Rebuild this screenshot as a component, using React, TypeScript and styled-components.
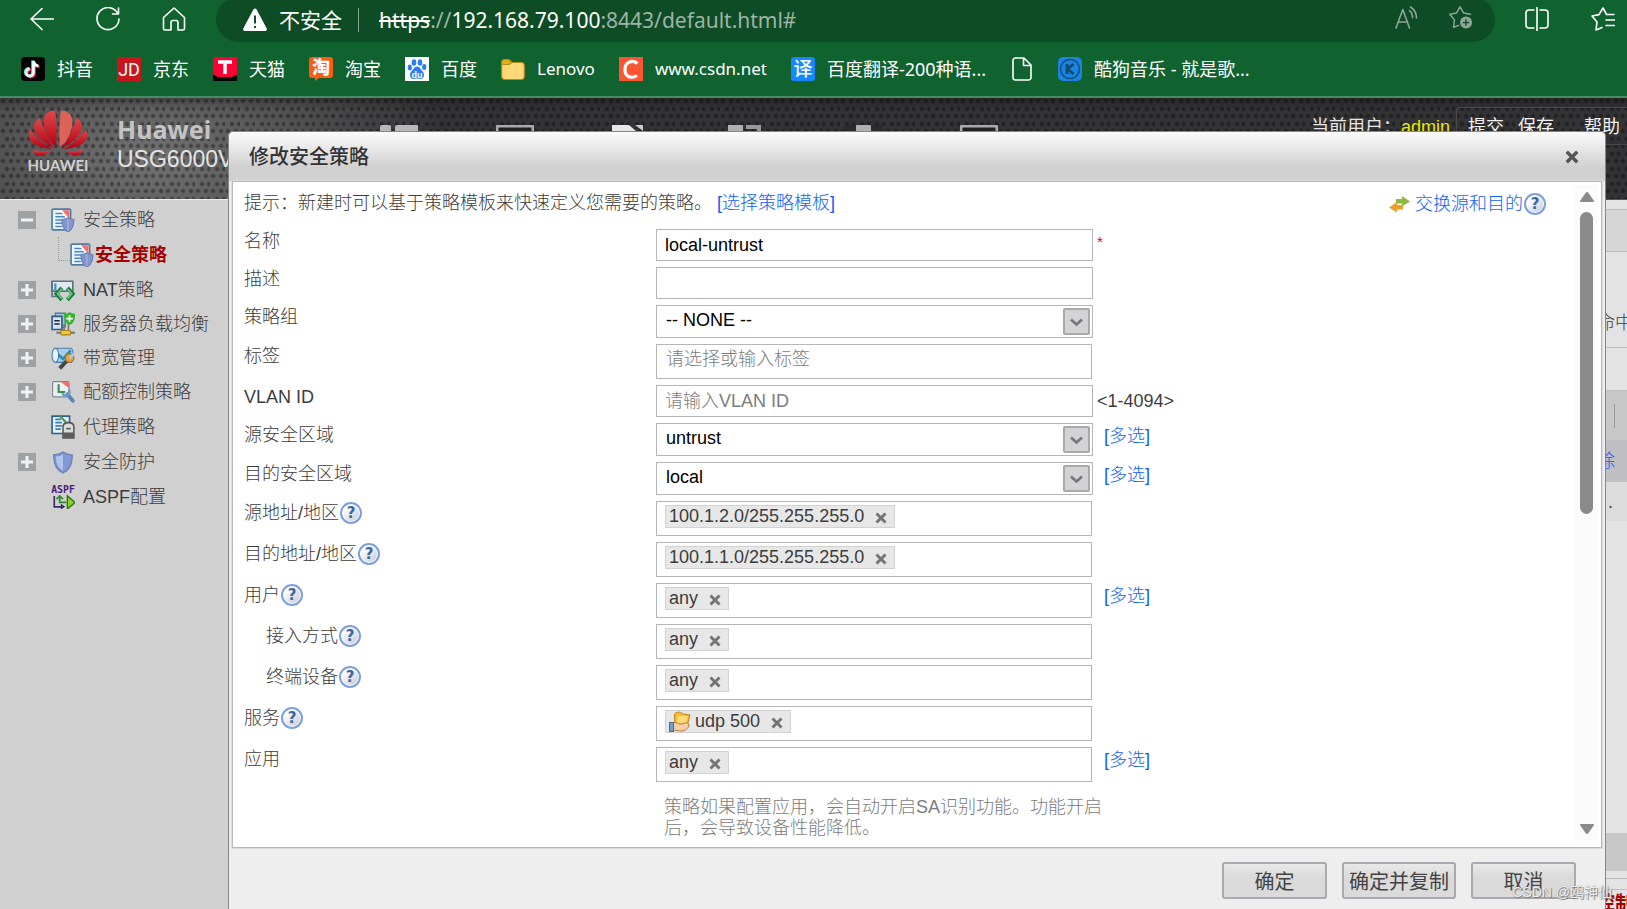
import React from 'react';
import styled, { createGlobalStyle } from 'styled-components';

const SONG = '"Liberation Sans", "Noto Sans CJK SC", sans-serif';
const UI = '"Noto Sans", "Noto Sans CJK SC", sans-serif';

const Global = createGlobalStyle`
  *, *::before, *::after { box-sizing: border-box; }
  body { margin: 0; }
  button, input, select { font: inherit; color: inherit; }
`;

const Page = styled.div`
  position: relative;
  display: flex;
  flex-direction: column;
  height: 100vh;
  overflow: hidden;
  background: #e3e3e3;
  color: #3c3c3c;
  font: 300 18px/24px ${SONG};
`;

/* ---------- browser chrome ---------- */

const Chrome = styled.div`
  flex: none;
  background: #10622f;
  border-bottom: 2px solid #4a8a62;
  color: #fff;
  font-family: ${UI};
  font-weight: 400;
`;

const Toolbar = styled.div`
  display: flex;
  align-items: center;
  gap: 42px;
  height: 42px;
  padding: 0 12px 0 30px;
`;

const IconButton = styled.button`
  display: flex;
  flex: none;
  align-items: center;
  justify-content: center;
  width: 24px;
  height: 24px;
  margin: 0 0 4px;
  padding: 0;
  border: 0;
  background: none;
  color: inherit;
`;

const AddressBar = styled.div`
  display: flex;
  flex: 1;
  align-items: center;
  gap: 12px;
  min-width: 0;
  height: 45px;
  margin: -3px -12px 0;
  padding: 0 22px 0 27px;
  border-radius: 23px;
  background: #0d4c25;
  overflow: hidden;
  white-space: nowrap;
`;

const Unsafe = styled.span`
  font-size: 21px;
`;

const Rule = styled.span`
  flex: none;
  width: 1px;
  height: 24px;
  margin: 0 8px 0 4px;
  background: #7fa58e;
`;

const Url = styled.span`
  flex: 1;
  overflow: hidden;
  font-size: 21px;
  line-height: 28px;
  color: #9fb3a6;

  s, b { color: #fff; font-weight: 400; }
`;

const PillIcons = styled.div`
  display: flex;
  gap: 30px;
  color: #8fa596;
`;

const Bookmarks = styled.nav`
  display: flex;
  align-items: center;
  gap: 24px;
  height: 54px;
  padding: 0 21px;
  overflow: hidden;
`;

const Bookmark = styled.a<{ $latin?: boolean }>`
  display: flex;
  flex: none;
  align-items: center;
  gap: 12px;
  color: #fff;
  font-size: ${(p) => (p.$latin ? 17 : 18)}px;
  text-decoration: none;
  white-space: nowrap;
`;

/* ---------- device header ---------- */

const dot = (x: number, y: number) =>
  `radial-gradient(circle at ${x}px ${y}px, rgba(0,0,0,0.38) 0 1px, transparent 3px) 0 0 / 15px 15px`;

const Banner = styled.header`
  display: flex;
  flex: none;
  height: 101px;
  padding-left: 26px;
  background: ${dot(3, 3)}, ${dot(11, 3)}, ${dot(7, 11)}, ${dot(14, 11)},
    linear-gradient(rgba(0, 0, 0, 0.25), transparent 12px),
    radial-gradient(ellipse 300px 170px at 150px 60px, #737373, #333335);
  color: #e6e6e6;
`;

const Brand = styled.div`
  display: flex;
  flex: none;
  gap: 27px;
  width: 354px;
  padding-top: 10px;
`;

const Product = styled.div`
  padding-top: 6px;
  font-size: 23px;
  line-height: 30px;
  color: #e4e4e4;

  strong {
    display: block;
    font: 700 25px/30px ${UI};
    color: #c4c4c4;
  }
`;

const Modules = styled.div`
  display: flex;
  flex: 1;
  gap: 78px;
  padding-top: 27px;

  svg { flex: none; }
`;

const Session = styled.div`
  display: flex;
  flex: none;
  padding-top: 9px;
  white-space: nowrap;
  font-weight: 400;

  > span { padding: 8px 6px 0 0; }
  em { color: #e8e800; font-style: normal; }
`;

const Actions = styled.div`
  display: flex;
  height: 38px;
  padding: 7px 7px 0 6px;
  border: 1px solid #4a4a4c;
  border-right: 0;
  border-radius: 4px 0 0 4px;

  a {
    padding: 0 5px;
    color: #f2f2f2;
    text-decoration: none;
  }
  a + a { margin-left: 4px; }
  a:last-child { margin-left: 20px; padding-right: 0; }
`;

/* ---------- page body ---------- */

const Columns = styled.div`
  display: flex;
  flex: 1;
  min-height: 0;
`;

const Sidebar = styled.nav`
  flex: none;
  width: 228px;
  padding-top: 3px;
  border-top: 1px solid #eee;
  background: #d0d0d0;
`;

const TreeRow = styled.div<{ $leaf?: boolean }>`
  display: flex;
  align-items: center;
  height: ${(p) => (p.$leaf ? 36 : 34)}px;
  padding-left: 18px;
`;

const Toggle = styled.button`
  flex: none;
  display: flex;
  align-items: center;
  justify-content: center;
  width: 18px;
  height: 18px;
  padding: 0;
  border: 0;
  background: #9fa2a5;
`;

const Spacer = styled.span`
  width: 18px;
`;

const Branch = styled.span`
  align-self: flex-start;
  width: 12px;
  height: 24px;
  margin-left: 22px;
  border: dotted #999;
  border-width: 0 0 1px 1px;
`;

const TreeLink = styled.a<{ $current?: boolean }>`
  display: flex;
  align-items: center;
  gap: ${(p) => (p.$current ? 1 : 8)}px;
  margin-left: ${(p) => (p.$current ? 0 : 15)}px;
  color: ${(p) => (p.$current ? '#a60000' : '#3c3c3c')};
  font-weight: ${(p) => (p.$current ? 700 : 300)};
  text-decoration: none;
  white-space: nowrap;
`;

const Backdrop = styled.main`
  flex: 1;
  min-width: 0;
  border-top: 1px solid #8a3a3a;
`;

const Strip = styled.div<{ $h: number; $bg?: string; $line?: boolean; $color?: string; $bold?: boolean }>`
  display: flex;
  align-items: center;
  justify-content: flex-end;
  height: ${(p) => p.$h}px;
  background: ${(p) => p.$bg || 'transparent'};
  border-bottom: ${(p) => (p.$line ? '1px solid #bdbdbd' : '0')};
  color: ${(p) => p.$color || '#3c3c3c'};
  font-weight: ${(p) => (p.$bold ? 700 : 300)};

  span {
    width: 30px;
    overflow: hidden;
    white-space: nowrap;
  }
  span.divider {
    width: 13px;
    height: 24px;
    border-left: 1px solid #999;
  }
  span.dots { width: 19px; }
`;

/* ---------- dialog ---------- */

const Dialog = styled.section`
  position: absolute;
  top: 131px;
  right: 21px;
  bottom: 0;
  left: 228px;
  display: flex;
  flex-direction: column;
  border: 1px solid #868686;
  border-bottom: 0;
  border-radius: 5px 5px 0 0;
  background: #eee;
`;

const TitleBar = styled.div`
  display: flex;
  flex: none;
  align-items: center;
  justify-content: space-between;
  height: 49px;
  padding: 0 26px 0 20px;
  border-radius: 5px 5px 0 0;
  background: linear-gradient(#fbfbfb, #cfcfcf 75%, #d2d2d2);

  h1 {
    margin: 0;
    font-size: 20px;
    font-weight: 500;
    color: #333;
  }
`;

const PlainButton = styled.button`
  display: flex;
  padding: 0;
  border: 0;
  background: none;
`;

const Body = styled.div`
  display: flex;
  flex: 1;
  min-height: 0;
  margin: 0 3px;
  border: 1px solid #b8b8b8;
  background: #fff;
  box-shadow: 0 0 0 1px #dcdcdc;
`;

const Form = styled.form`
  display: flex;
  flex: 1;
  flex-direction: column;
  gap: 6px;
  min-width: 0;
  padding: 9px 0 0 11px;
  overflow: hidden;
`;

const Hint = styled.div`
  display: flex;
  align-items: center;
  justify-content: space-between;
  height: 24px;
  margin-bottom: 8px;
  padding-right: 29px;
  white-space: nowrap;
`;

const Link = styled.a`
  color: #1060ff;
  text-decoration: none;
`;

const Swap = styled.span`
  display: flex;
  align-items: center;
  gap: 5px;
  padding-top: 2px;

  > span { display: flex; align-items: center; gap: 1px; }
`;

const Row = styled.div`
  display: grid;
  grid-template-columns: 412px 437px 1fr;
`;

const Caption = styled.div<{ $indent?: boolean }>`
  display: flex;
  align-items: center;
  gap: 1px;
  height: 24px;
  padding-left: ${(p) => (p.$indent ? 22 : 0)}px;
`;

const HelpButton = styled.button`
  flex: none;
  width: 22px;
  height: 22px;
  padding: 0;
  border: 2px solid #7c9fe0;
  border-radius: 50%;
  background: linear-gradient(135deg, #fff 20%, #c2c6d0);
  box-shadow: inset 0 0 0 1px #fff;
  color: #3a66a8;
  font: 700 15px/18px "DejaVu Sans", sans-serif;
`;

const Aside = styled.div<{ $middle?: boolean }>`
  align-self: ${(p) => (p.$middle ? 'center' : 'start')};
  padding-left: 4px;

  a { display: block; padding: 1px 0 0 7px; }
`;

const Star = styled.span`
  color: #f00;
  font-size: 15px;
  font-weight: 400;
`;

const TextInput = styled.input`
  width: 100%;
  height: 32px;
  padding: 0 8px;
  border: 1px solid #b5b5ba;
  background: #fff;
  color: #000;
  outline: 0;

  &::placeholder { color: #7c7c7c; opacity: 1; }
`;

const SelectBox = styled.div`
  position: relative;
  height: 33px;

  svg {
    position: absolute;
    top: 3px;
    right: 3px;
    pointer-events: none;
  }
`;

const Select = styled.select`
  width: 100%;
  height: 100%;
  padding: 0 30px 3px 9px;
  border: 1px solid #b5b5ba;
  border-radius: 0;
  background: #fff;
  color: #000;
  appearance: none;
  outline: 0;
`;

const TagBox = styled.div`
  display: flex;
  align-items: flex-start;
  height: 35px;
  margin-right: 1px;
  padding: 3px 8px;
  border: 1px solid #b5b5ba;

  input {
    flex: 1;
    min-width: 0;
    height: 22px;
    padding: 0 1px;
    border: 0;
    background: none;
    outline: 0;
  }
  input::placeholder { color: #7c7c7c; opacity: 1; }
`;

const Tag = styled.span`
  display: flex;
  align-items: center;
  gap: 4px;
  height: 23px;
  padding: 0 7px 0 3px;
  border: 1px solid #d2d2d2;
  background: #e7e7e7;
  line-height: 21px;
  white-space: nowrap;

  button { margin: 2px 0 0 7px; }
`;

const Note = styled.p`
  width: 440px;
  margin: 9px 0 0 420px;
  line-height: 21px;
  color: #7c7c7c;
`;

const Scrollbar = styled.div`
  display: flex;
  flex: none;
  flex-direction: column;
  align-items: center;
  width: 23px;
  margin: 3px 3px 6px 0;
  padding: 7px 0;
  background: #fbfbfb;
`;

const Thumb = styled.div`
  width: 13px;
  height: 47%;
  margin: 10px 0 auto;
  border-radius: 7px;
  background: #8a8a8a;
`;

const Footer = styled.div`
  display: flex;
  flex: none;
  justify-content: flex-end;
  gap: 15px;
  padding: 14px 29px 10px;
`;

const PushButton = styled.button`
  min-width: 105px;
  height: 37px;
  padding: 0 5px;
  border: 2px solid #a9a9ae;
  border-radius: 3px;
  background: linear-gradient(#e9e9e9, #dadada 40%);
  color: #444;
  font: 400 20px/30px "Noto Sans CJK SC", sans-serif;
`;

const Watermark = styled.div`
  position: absolute;
  right: 15px;
  bottom: 6px;
  color: rgba(255, 255, 255, 0.85);
  font: 400 14px/22px "Liberation Sans", "Noto Sans CJK SC", sans-serif;
  text-shadow: 1px 1px 1px #777, 0 0 1px #999;
`;

/* ---------- drawings ---------- */

const Svg = ({ w = 24, h = w, box, children }: { w?: number; h?: number; box?: string; children: React.ReactNode }) => (
  <svg width={w} height={h} viewBox={box || `0 0 ${w} ${h}`} fill="none" aria-hidden="true">{children}</svg>
);

const TreeIcon = ({ children }: { children: React.ReactNode }) => <Svg box="0 0 22 22">{children}</Svg>;

const line = { stroke: 'currentColor', strokeWidth: 1.6, strokeLinecap: 'round', strokeLinejoin: 'round' } as const;

const BackIcon = () => <Svg><path {...line} d="M24 12H1M12 1.5 1 12l11 10.500" /></Svg>;
const ReloadIcon = () => <Svg><path {...line} d="M22 7A11 11 0 1 0 23 12M22.500 1v6h-6" /></Svg>;
const HomeIcon = () => <Svg><path {...line} d="M1.500 10.500 12 1l10.500 9.500V21.500a1.500 1.500 0 0 1-1.500 1.500h-5v-7.500a2 2 0 0 0-2-2h-3a2 2 0 0 0-2 2V23H3a1.500 1.500 0 0 1-1.500-1.500z" /></Svg>;
const WarnIcon = () => (
  <Svg><path fill="#fff" d="M10.400 1.500c.7-1.300 2.500-1.300 3.200 0l10 18.800c.6 1.200-.2 2.700-1.600 2.700H2c-1.400 0-2.200-1.500-1.600-2.700z" /><path d="M12 7.500v8M12 18v2" stroke="#0d4c25" strokeWidth="2" /></Svg>
);
const ReadIcon = () => <Svg><path {...line} d="M1 22 7.800 3.500 14.500 22M3.500 16h9M14.500 4.500a9 9 0 0 1 3 7M15.500 1a13 13 0 0 1 6 11" /></Svg>;
const STAR = 'M10.500 21 5 23l.9-7.900L.8 9l7.400-1.400L12 1l3.800 6.600L23.200 9';
const StarAddIcon = () => (
  <Svg w={26} h={25}><path {...line} d={STAR} /><circle cx="18.500" cy="18" r="6.500" fill="currentColor" /><path d="M18.500 14.500v7M15 18h7" stroke="#0d4c25" strokeWidth="1.500" /></Svg>
);
const SplitIcon = () => <Svg><path {...line} d="M9 3H4a3 3 0 0 0-3 3v12a3 3 0 0 0 3 3h5M15 3h5a3 3 0 0 1 3 3v12a3 3 0 0 1-3 3h-5M12 .500v23" /></Svg>;
const FavIcon = () => <Svg><path {...line} d="M11 20.500 5 23l1-7.900L1 9l7-1.400L12 1l3.600 6.500H23M15 13h9M15 18.500h9" /></Svg>;

const mark = (bg: string, radius: number, children: React.ReactNode) => (
  <Svg><rect width="24" height="24" rx={radius} fill={bg} />{children}</Svg>
);
const markText = { textAnchor: 'middle', fill: '#fff', x: 12 } as const;

const NOTE_PATH = 'M12.500 4v11.500a3.700 3.700 0 1 1-3.700-3.700M12.500 4c.4 3 2.500 4.700 5 4.800';

const bookmarks: { label: string; latin?: boolean; icon: React.ReactNode }[] = [
  {
    label: '抖音',
    icon: mark('#000', 4, (
      <g strokeWidth="2.600">
        <path d={NOTE_PATH} stroke="#25f4ee" transform="translate(-1 -.5)" />
        <path d={NOTE_PATH} stroke="#fe2c55" transform="translate(1 1)" />
        <path d={NOTE_PATH} stroke="#fff" />
      </g>
    )),
  },
  { label: '京东', icon: mark('#c9151e', 0, <text {...markText} y="19" fontFamily="Roboto" fontSize="18" fontWeight="400">JD</text>) },
  {
    label: '天猫',
    icon: mark('#ff0036', 0, (
      <>
        <path d="M0 24v-6c3 0 3 2 6 2h12c3 0 3-2 6-2v6z" fill="#000" />
        <path d="M5 5h14M12 5v12" stroke="#fff" strokeWidth="3.500" />
      </>
    )),
  },
  {
    label: '淘宝',
    icon: (
      <Svg>
        <path d="M3 0h18a3 3 0 0 1 3 3v15a3 3 0 0 1-3 3h-11l-4 3v-3H3a3 3 0 0 1-3-3V3a3 3 0 0 1 3-3z" fill="#ff5a12" />
        <text {...markText} y="17" fontFamily="Noto Sans CJK SC" fontSize="18" fontWeight="900">淘</text>
      </Svg>
    ),
  },
  {
    label: '百度',
    icon: mark('#fff', 0, (
      <>
        <g fill="#2d7df6">
          <ellipse cx="9" cy="5.500" rx="2.300" ry="3.200" /><ellipse cx="15" cy="5.500" rx="2.300" ry="3.200" />
          <ellipse cx="4.800" cy="10.500" rx="2.100" ry="2.900" /><ellipse cx="19.200" cy="10" rx="2.100" ry="2.900" />
          <path d="M12 9.500c3 0 3.500 3 5.500 4.800 2.500 2.400 1.800 7.700-2 7.700-1.500 0-2-.4-3.500-.4s-2 .4-3.500.4c-3.800 0-4.500-5.300-2-7.700 2-1.800 2.500-4.800 5.500-4.800z" />
        </g>
        <text {...markText} y="20.500" fontFamily="Liberation Sans" fontSize="9" fontWeight="700">du</text>
      </>
    )),
  },
  {
    label: 'Lenovo',
    latin: true,
    icon: (
      <Svg>
        <path d="M.700 5.500a3 3 0 0 1 3-3h4l3 3h9.600a3 3 0 0 1 3 3v11a3 3 0 0 1-3 3H3.700a3 3 0 0 1-3-3z" fill="#ffd978" stroke="#b88a1a" strokeWidth="1.200" />
        <path d="M.700 7.500v-2a3 3 0 0 1 3-3h4l3 3-2.500 2z" fill="#e3b112" stroke="#b88a1a" strokeWidth="1.200" />
      </Svg>
    ),
  },
  { label: 'www.csdn.net', latin: true, icon: mark('#fc5531', 0, <path d="M18.500 6.500C14 2.500 6 4.500 6 12.500s7 9.500 12 6" stroke="#fff" strokeWidth="3.200" />) },
  { label: '百度翻译-200种语...', icon: mark('#1688ff', 3, <text {...markText} y="19" fontFamily="Noto Sans CJK SC" fontSize="19" fontWeight="500">译</text>) },
  { label: '', icon: <Svg><path {...line} d="M5.500 1H14l7 7v12.500a2.500 2.500 0 0 1-2.500 2.500h-13A2.500 2.500 0 0 1 3 20.500v-17A2.500 2.500 0 0 1 5.500 1zM13.500 1v7.500H21" /></Svg> },
  {
    label: '酷狗音乐 - 就是歌...',
    icon: mark('#1d83e2', 5, (
      <>
        <circle cx="12" cy="12" r="9.500" stroke="#0e4f7c" strokeWidth="1.500" />
        <path d="M9 7v10M15.500 7 9.500 12l6 5" stroke="#0d4a70" strokeWidth="2.800" />
      </>
    )),
  },
];

const HuaweiLogo = () => (
  <Svg w={64} h={64}>
    <defs>
      <linearGradient id="petal" x1="0" y1="0" x2="0" y2="1">
        <stop offset="0" stopColor="#e2474a" />
        <stop offset="1" stopColor="#b30012" />
      </linearGradient>
    </defs>
    <g fill="url(#petal)">
      <path d="M30 39C18 30 15 12 20 6c3-3 8-4 9-3 2 10 2 25 1 36z" />
      <path d="M34 39C46 30 49 12 44 6c-3-3-8-4-9-3-2 10-2 25-1 36z" fill="#dd6258" />
      <path d="M28 40C13 33 7 23 8 17c1-4 4-6 6-7 2 9 8 22 14 30z" />
      <path d="M36 40C51 33 57 23 56 17c-1-4-4-6-6-7-2 9-8 22-14 30z" />
      <path d="M26 41C12 40 4 35 3 29c0-3 0-6 1-8 6 8 13 15 22 20z" />
      <path d="M38 41c14-1 22-6 23-12 0-3 0-6-1-8-6 8-13 15-22 20z" />
      <path d="M25 43c-7 5-11 5-14 4-3-2-4-4-4-5 6 1 12 1 18 1z" />
      <path d="M39 43c7 5 11 5 14 4 3-2 4-4 4-5-6 1-12 1-18 1z" />
    </g>
    <text x="32" y="63" textAnchor="middle" fill="#d0d0d0" fontFamily="Lato" fontSize="15" fontWeight="700">HUAWEI</text>
  </Svg>
);

const moduleIcons = [
  <><rect width="11" height="18" rx="2" fill="#b8b8b8" /><rect x="15" width="24" height="18" rx="2" fill="#b8b8b8" /></>,
  <rect x="1" y="1" width="36" height="26" rx="1" stroke="#aaa" strokeWidth="3" fill="#222" />,
  <><path d="M0 0h17l14 12v24H0z" fill="#e6e6e6" /><path d="M23 0h8v6z" fill="#ccc" /></>,
  <><rect width="15" height="18" fill="#b0b0b0" /><path d="M18 2h13v14" stroke="#999" strokeWidth="4" /></>,
  <><rect x="0" width="38" height="22" fill="#2a2a2a" /><rect x="12" width="15" height="20" rx="1" fill="#b0b0b0" /></>,
  <rect x="1" y="1" width="36" height="26" rx="2" stroke="#aaa" strokeWidth="3" fill="#222" />,
];

const shieldPath = 'M0 1.500C2 1.500 4 1 5.500 0 7 1 9 1.500 11 1.500 11 7 10 10.500 5.500 13 1 10.500 0 7 0 1.500z';

const PolicyIcon = () => (
  <TreeIcon>
    <rect x="1" y="1" width="17" height="19" rx="1" fill="#eaf4fb" stroke="#4d7ea3" strokeWidth="1.500" />
    <path d="M4 5h7M4 8h9M4 11h7M4 14h6M4 17h6" stroke="#4b8cc0" strokeWidth="1.400" />
    <path d="M10 2h7v8z" fill="#f07070" />
    <path d="m9 2 8 10" stroke="#fff" strokeWidth="1.500" />
    <g transform="translate(10 9)"><path d={shieldPath} fill="#8397cc" stroke="#6c7fbc" /><path d="M5.500 1v11" stroke="#a9b8e4" /></g>
  </TreeIcon>
);

const treeIcons: Record<string, React.ReactNode> = {
  nat: (
    <TreeIcon>
      <path d="M1 3h19v9H1z" fill="#dfe8ee" stroke="#5a7384" strokeWidth="1.500" />
      <path d="M1 3v14h5" stroke="#5a7384" strokeWidth="1.500" /><path d="M4 5v6" stroke="#3a8bd0" strokeWidth="2" />
      <path d="m10 9-5 5.500 5 5.500M15 9l5 5.500-5 5.500" stroke="#1e7d3e" strokeWidth="3.600" />
      <path d="m10 10-4 4.500 4 4.500M15 10l4 4.500-4 4.500" stroke="#6fd08a" strokeWidth="1.400" />
    </TreeIcon>
  ),
  server: (
    <TreeIcon>
      <path d="M4 1h9v13H4z" fill="#9fc2e4" stroke="#4b6c8c" /><path d="M1 4h9v12H1z" fill="#d5e4f2" stroke="#335b80" strokeWidth="1.500" />
      <path d="M3 8h5M3 11h5" stroke="#224" strokeWidth="1.500" />
      <path d="M12 11v8M16 8v10" stroke="#777" strokeWidth="1.500" />
      <path d="M17 0c2 1.500 3 1.500 5 1.500 0 6-1 8.500-5 10.500-4-2-5-4.500-5-10.500 2 0 3 0 5-1.500z" fill="#35b52b" />
      <path d="M17 3v6M14 6h6" stroke="#fff" strokeWidth="1.600" />
      <path d="M5 19h17" stroke="#777" strokeWidth="2" /><rect x="9" y="17" width="9" height="4" rx="1" fill="#f0c63c" stroke="#a8851a" />
    </TreeIcon>
  ),
  band: (
    <TreeIcon>
      <path d="M4 2h14c3 0 3 13 0 13H4z" fill="#a9cdee" stroke="#4c7aa8" /><ellipse cx="4" cy="8.500" rx="3" ry="6.500" fill="#e6f2fc" stroke="#4c7aa8" />
      <path d="m7 8 4 4 7-8" stroke="#1f8fb5" strokeWidth="2.500" />
      <path d="M8 20.500 15 13" stroke="#444" strokeWidth="3.500" /><circle cx="17" cy="11" r="4" fill="#e6a23c" stroke="#a8701c" /><path d="m17 11 4-4" stroke="#a9cdee" strokeWidth="2.500" />
    </TreeIcon>
  ),
  quota: (
    <TreeIcon>
      <rect x="1.500" y="1.500" width="15" height="14" rx="1" fill="#eceff2" stroke="#7b8794" />
      <path d="M9 1.500h7.500v6z" fill="#ee7070" /><path d="M7 4v7h6" stroke="#3a8f58" strokeWidth="2" />
      <path d="m15 13 5 6" stroke="#5b87b8" strokeWidth="3.500" strokeLinecap="round" />
      <path d="M10.500 12a3.200 3.200 0 0 0 5.500 1.500 3.200 3.200 0 0 0 0-4.500" stroke="#6d9aca" strokeWidth="2.200" />
    </TreeIcon>
  ),
  proxy: (
    <TreeIcon>
      <path d="M1 1h16v16H1z" fill="#e3f0fa" stroke="#2f6288" strokeWidth="1.500" />
      <path d="M4 4h5M4 7h6M4 10h6M4 13h5" stroke="#3c7fb5" strokeWidth="1.500" /><path d="m8 1 8 8" stroke="#4a9a4a" strokeWidth="2" />
      <path d="M11 11c0-3 2-4 5-4s5 1 5 4v10H11z" fill="#dcdcdc" stroke="#555" strokeWidth="1.400" /><path d="M11 16h10v5H11z" fill="#5c5c5c" /><path d="M14 12.500h4" stroke="#4a6a50" strokeWidth="1.600" />
    </TreeIcon>
  ),
  shield: (
    <TreeIcon>
      <path d="M11 2c3 2 6 2.500 8.500 2.500C19.500 12 18 18 11 21 4 18 2.500 12 2.500 4.500 5 4.500 8 4 11 2z" fill="#7f9ad6" stroke="#6c82ba" strokeWidth="1.300" />
      <path d="M11 4v15C6 16 4.500 11 4.500 6c3 0 4.500-.6 6.500-2z" fill="#b3c5ee" />
    </TreeIcon>
  ),
  aspf: (
    <TreeIcon>
      <text x="11" y="7" textAnchor="middle" fill="#4a1a7a" fontFamily="DejaVu Sans Mono" fontSize="9" fontWeight="700">ASPF</text>
      <path d="M3 10v10h7" stroke="#3c2a66" strokeWidth="1.500" /><path d="m9 17 4 3-4 2.500z" fill="#3c2a66" />
      <path d="M14 16H8v-5M5 13l3-3 3 3" stroke="#2f8a2f" strokeWidth="1.600" />
      <path d="m15 10 7 6-7 6z" fill="#8fd02c" stroke="#2a7a1a" strokeWidth="1.300" />
    </TreeIcon>
  ),
};

const Cross = ({ size, color }: { size: number; color: string }) => (
  <Svg w={size} box="0 0 12 12"><path d="m1.500 1.500 9 9M10.500 1.500l-9 9" stroke={color} strokeWidth="2.900" /></Svg>
);

const DropArrow = () => (
  <Svg w={27} h={27}>
    <rect x="1" y="1" width="25" height="25" rx="1" fill="#d3d3d5" stroke="#a9a9ad" strokeWidth="2" />
    <path d="m8 11.500 5.500 5 5.500-5" stroke="#77777b" strokeWidth="2.600" />
  </Svg>
);

const SwapIcon = () => (
  <Svg w={21} h={18}>
    <path d="M7 4h6V1l8 5.500-8 5V8.500H7z" fill="#8fb843" />
    <path d="M14 10h-6V7L0 12.500l8 5v-3h6z" fill="#eaa02c" />
  </Svg>
);

const ServiceIcon = () => (
  <Svg w={22}>
    <path d="M5.500 3c3-3 7-2 8.500 0l7 1-3 11-12 1z" fill="#f6bd38" stroke="#c4811c" />
    <path d="M9 5h10l-2 8H7z" fill="#ffdc70" />
    <path d="M4 12c4-2 6 2 9 1s7-2 7 1-4 6-8 6-6-1-8-1z" fill="#f6d0a4" stroke="#b57436" />
    <rect x=".500" y="11.500" width="4" height="9" fill="#6f9fd0" stroke="#3f6f9f" />
  </Svg>
);

/* ---------- assembled parts ---------- */

const Help = () => <HelpButton type="button" aria-label="帮助">?</HelpButton>;

const MultiSelect = () => <Aside><Link href="#">[多选]</Link></Aside>;

type FieldProps = { id: string; label: string; help?: boolean; indent?: boolean; aside?: React.ReactNode; children: React.ReactNode };
const Field = ({ id, label, help, indent, aside, children }: FieldProps) => (
  <Row>
    <Caption $indent={indent}>
      <label htmlFor={id}>{label}</label>
      {help && <Help />}
    </Caption>
    {children}
    {aside}
  </Row>
);

const Dropdown = ({ id, value }: { id: string; value: string }) => (
  <SelectBox>
    <Select id={id} defaultValue={value}><option>{value}</option></Select>
    <DropArrow />
  </SelectBox>
);

const TagInput = ({ id, value, icon, placeholder }: { id: string; value?: string; icon?: React.ReactNode; placeholder?: string }) => (
  <TagBox>
    {value && (
      <Tag>
        {icon}
        {value}
        <PlainButton type="button" aria-label={`删除 ${value}`}><Cross size={12} color="#747474" /></PlainButton>
      </Tag>
    )}
    <input id={id} placeholder={placeholder} />
  </TagBox>
);

const tree = [
  { label: 'NAT策略', icon: 'nat', open: true },
  { label: '服务器负载均衡', icon: 'server', open: true },
  { label: '带宽管理', icon: 'band', open: true },
  { label: '配额控制策略', icon: 'quota', open: true },
  { label: '代理策略', icon: 'proxy', open: false },
  { label: '安全防护', icon: 'shield', open: true },
  { label: 'ASPF配置', icon: 'aspf', open: false },
];

export default function App() {
  return (
    <Page>
      <Global />
      <Chrome>
        <Toolbar>
          <IconButton aria-label="后退"><BackIcon /></IconButton>
          <IconButton aria-label="刷新"><ReloadIcon /></IconButton>
          <IconButton aria-label="主页"><HomeIcon /></IconButton>
          <AddressBar>
            <WarnIcon />
            <Unsafe>不安全</Unsafe>
            <Rule />
            <Url><s>https</s>://<b>192.168.79.100</b>:8443/default.html#</Url>
            <PillIcons>
              <IconButton aria-label="朗读"><ReadIcon /></IconButton>
              <IconButton aria-label="收藏"><StarAddIcon /></IconButton>
            </PillIcons>
          </AddressBar>
          <IconButton aria-label="分屏"><SplitIcon /></IconButton>
          <IconButton aria-label="收藏夹"><FavIcon /></IconButton>
        </Toolbar>
        <Bookmarks>
          {bookmarks.map((b) => (
            <Bookmark key={b.label} href="#" $latin={b.latin}>
              {b.icon}
              {b.label && <span>{b.label}</span>}
            </Bookmark>
          ))}
        </Bookmarks>
      </Chrome>

      <Banner>
        <Brand>
          <HuaweiLogo />
          <Product><strong>Huawei</strong>USG6000V</Product>
        </Brand>
        <Modules>
          {moduleIcons.map((icon, i) => <Svg key={i} w={38} h={36}>{icon}</Svg>)}
        </Modules>
        <Session>
          <span>当前用户：<em>admin</em></span>
          <Actions>
            <a href="#">提交</a>
            <a href="#">保存</a>
            <a href="#">帮助</a>
          </Actions>
        </Session>
      </Banner>

      <Columns>
        <Sidebar>
          <TreeRow>
            <Toggle aria-label="收起"><Svg w={12}><path d="M0 6h12" stroke="#f2f2f2" strokeWidth="3" /></Svg></Toggle>
            <TreeLink href="#"><PolicyIcon />安全策略</TreeLink>
          </TreeRow>
          <TreeRow $leaf>
            <Spacer />
            <Branch />
            <TreeLink href="#" $current><PolicyIcon />安全策略</TreeLink>
          </TreeRow>
          {tree.map((t) => (
            <TreeRow key={t.label} $leaf={!t.open}>
              {t.open ? (
                <Toggle aria-label="展开"><Svg w={12}><path d="M0 6h12M6 0v12" stroke="#f2f2f2" strokeWidth="3" /></Svg></Toggle>
              ) : <Spacer />}
              <TreeLink href="#">{treeIcons[t.icon]}{t.label}</TreeLink>
            </TreeRow>
          ))}
        </Sidebar>
        <Backdrop>
          <Strip $h={10} $line />
          <Strip $h={42} $bg="#d6d6d6" $line />
          <Strip $h={47} />
          <Strip $h={49} $line><span>命中</span></Strip>
          <Strip $h={43} $line />
          <Strip $h={49} $bg="#c8c8c9"><span className="divider" /></Strip>
          <Strip $h={42} $bg="#bfbfc2" $color="#1060ff"><span>除</span></Strip>
          <Strip $h={39} $bg="#dcdcdc"><span className="dots">.</span></Strip>
          <Strip $h={312} />
          <Strip $h={38} $bg="#c8c8c8" />
          <Strip $h={8} $line />
          <Strip $h={11} $line />
          <Strip $h={26} $color="#a60000" $bold><span>控制台</span></Strip>
        </Backdrop>
      </Columns>

      <Dialog role="dialog" aria-labelledby="dialog-title">
        <TitleBar>
          <h1 id="dialog-title">修改安全策略</h1>
          <PlainButton type="button" aria-label="关闭"><Cross size={14} color="#555" /></PlainButton>
        </TitleBar>
        <Body>
          <Form>
            <Hint>
              <span>提示：新建时可以基于策略模板来快速定义您需要的策略。 <Link href="#">[选择策略模板]</Link></span>
              <Swap>
                <SwapIcon />
                <span><Link href="#">交换源和目的</Link><Help /></span>
              </Swap>
            </Hint>
            <Field id="name" label="名称" aside={<Aside><Star>*</Star></Aside>}>
              <TextInput id="name" defaultValue="local-untrust" />
            </Field>
            <Field id="desc" label="描述"><TextInput id="desc" /></Field>
            <Field id="group" label="策略组"><Dropdown id="group" value="-- NONE --" /></Field>
            <Field id="tag" label="标签"><TagInput id="tag" placeholder="请选择或输入标签" /></Field>
            <Field id="vlan" label="VLAN ID" aside={<Aside $middle>&lt;1-4094&gt;</Aside>}>
              <TextInput id="vlan" placeholder="请输入VLAN ID" />
            </Field>
            <Field id="src-zone" label="源安全区域" aside={<MultiSelect />}><Dropdown id="src-zone" value="untrust" /></Field>
            <Field id="dst-zone" label="目的安全区域" aside={<MultiSelect />}><Dropdown id="dst-zone" value="local" /></Field>
            <Field id="src-addr" label="源地址/地区" help><TagInput id="src-addr" value="100.1.2.0/255.255.255.0" /></Field>
            <Field id="dst-addr" label="目的地址/地区" help><TagInput id="dst-addr" value="100.1.1.0/255.255.255.0" /></Field>
            <Field id="user" label="用户" help aside={<MultiSelect />}><TagInput id="user" value="any" /></Field>
            <Field id="access" label="接入方式" help indent><TagInput id="access" value="any" /></Field>
            <Field id="device" label="终端设备" help indent><TagInput id="device" value="any" /></Field>
            <Field id="service" label="服务" help><TagInput id="service" value="udp 500" icon={<ServiceIcon />} /></Field>
            <Field id="app" label="应用" aside={<MultiSelect />}><TagInput id="app" value="any" /></Field>
            <Note>策略如果配置应用，会自动开启SA识别功能。功能开启后，会导致设备性能降低。</Note>
          </Form>
          <Scrollbar>
            <Svg w={14} h={10}><path d="M7 0c.6 0 1 .3 1.300.7L14 9c0 .6-.3 1-1 1H1c-.7 0-1-.4-1-1L5.700.7C6 .3 6.400 0 7 0z" fill="#8a8a8a" /></Svg>
            <Thumb />
            <Svg w={14} h={10}><path d="M7 10c.6 0 1-.3 1.300-.7L14 1c0-.6-.3-1-1-1H1C.3 0 0 .4 0 1l5.700 8.300c.3.4.7.7 1.300.7z" fill="#8a8a8a" /></Svg>
          </Scrollbar>
        </Body>
        <Footer>
          <PushButton type="button">确定</PushButton>
          <PushButton type="button">确定并复制</PushButton>
          <PushButton type="button">取消</PushButton>
        </Footer>
      </Dialog>
      <Watermark>CSDN @鸥神仙</Watermark>
    </Page>
  );
}
